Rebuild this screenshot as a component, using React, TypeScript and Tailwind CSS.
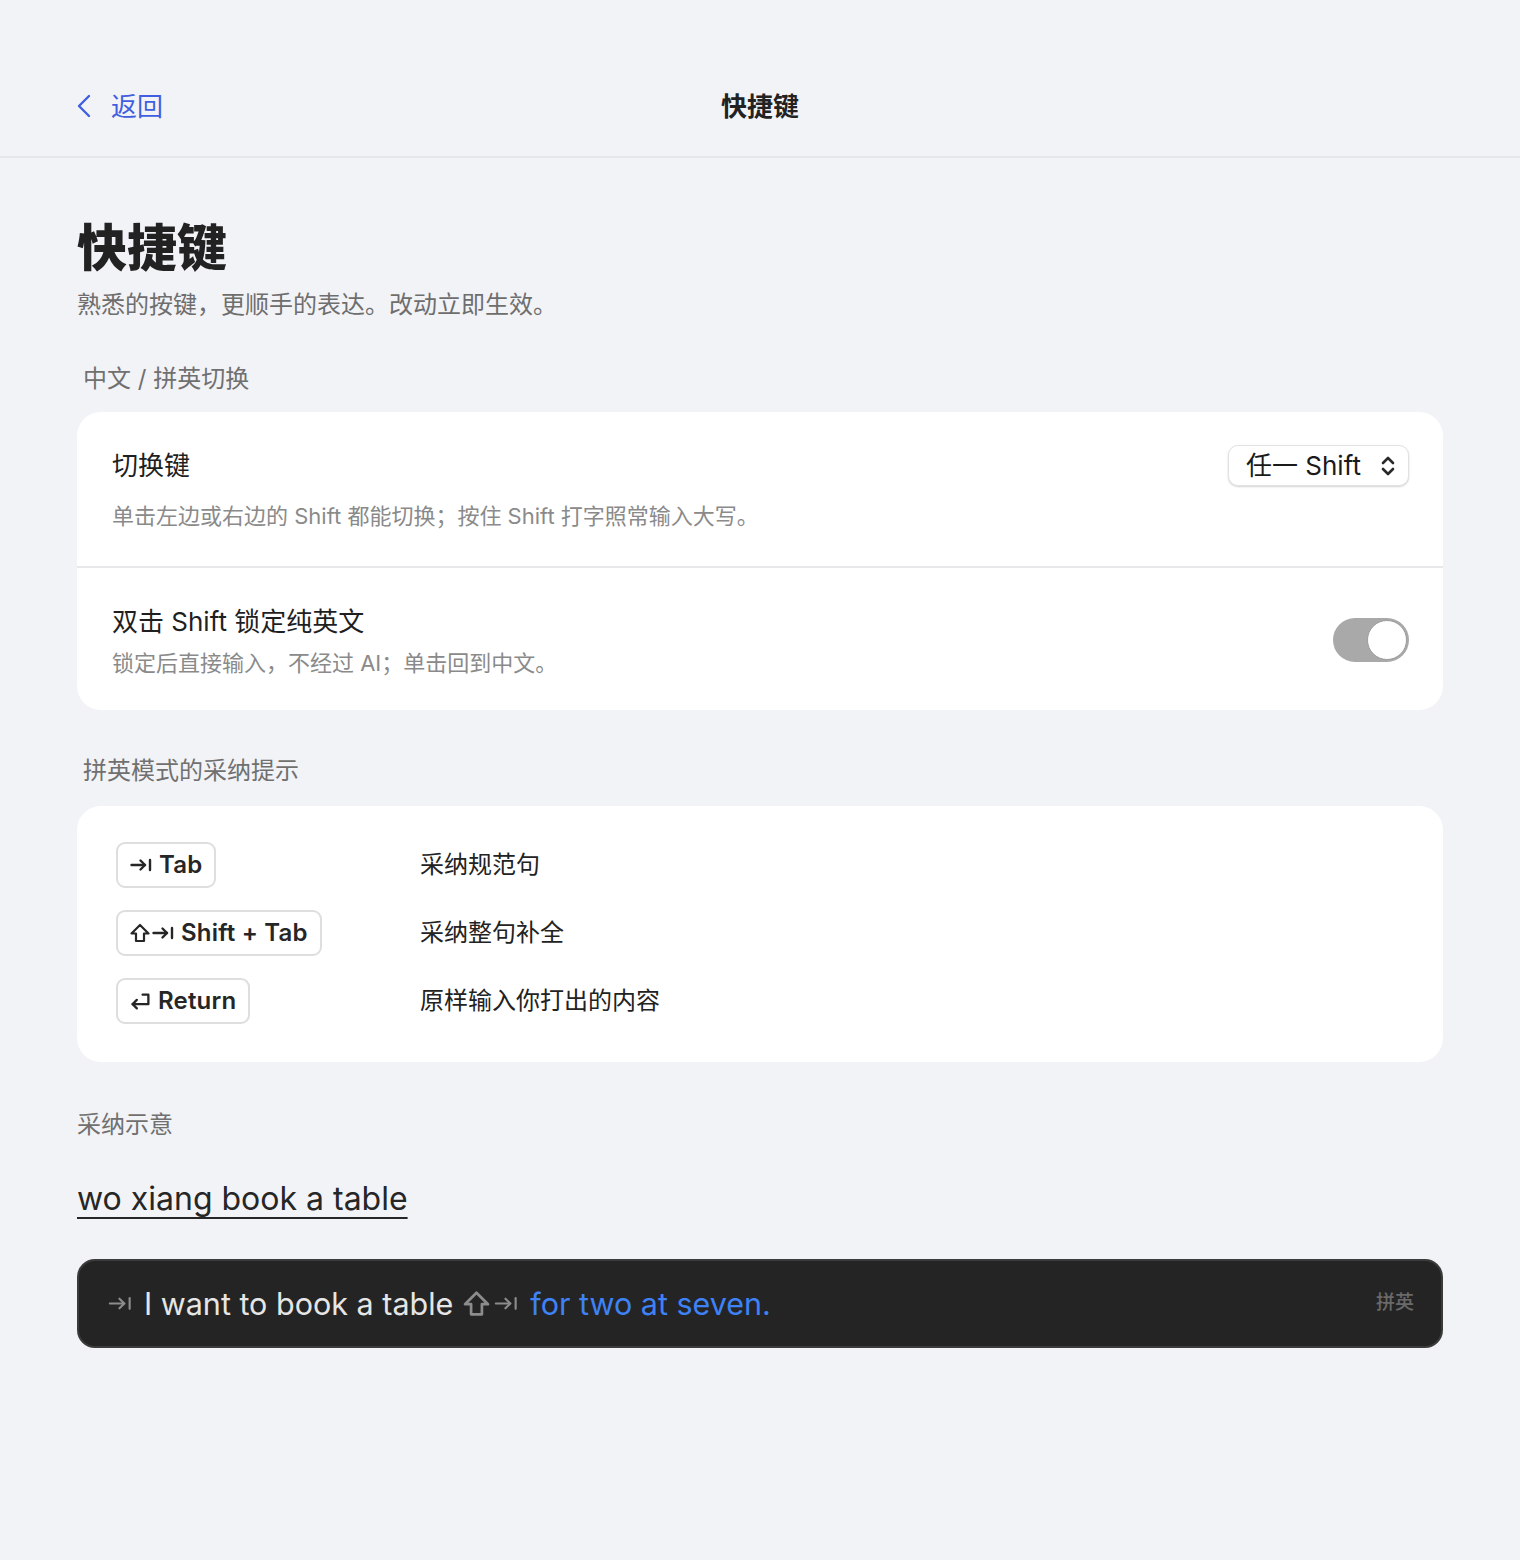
import React from "react";

const font = { fontFamily: '"Inter", "Noto Sans CJK SC", sans-serif' };

function TabIcon({ className = "", sw = 2 }: { className?: string; sw?: number }) {
  return (
    <svg viewBox="0 0 22 14" className={className} fill="none" stroke="currentColor" strokeWidth={sw} strokeLinecap="round" strokeLinejoin="round">
      <path d="M1.5 7 H15" />
      <path d="M10.5 2.5 L15 7 L10.5 11.5" />
      <path d="M20 2 V12" />
    </svg>
  );
}

function ShiftIcon({ className = "", sw = 2 }: { className?: string; sw?: number }) {
  return (
    <svg viewBox="0 0 20 20" className={className} fill="none" stroke="currentColor" strokeWidth={sw} strokeLinejoin="round">
      <path d="M10 2 L18.5 10.5 H14 V18 H6 V10.5 H1.5 Z" />
    </svg>
  );
}

function ReturnIcon({ className = "" }: { className?: string }) {
  return (
    <svg viewBox="0 0 20 18" className={className} fill="none" stroke="currentColor" strokeWidth="2.2" strokeLinecap="round" strokeLinejoin="round">
      <path d="M12 2.5 H17.5 V11.5 H2.5" />
      <path d="M6.5 7.5 L2.5 11.5 L6.5 15.5" />
    </svg>
  );
}

function Keycap({ children }: { children: React.ReactNode }) {
  return (
    <div className="inline-flex h-[46px] items-center gap-[7px] rounded-[9px] border-2 border-[#dedede] bg-white pl-[12px] pr-[12px] text-[24px] font-semibold tracking-[0.2px] text-[#262626]">
      {children}
    </div>
  );
}

export default function App() {
  return (
    <div className="min-h-[1560px] w-full bg-[#f2f3f7]" style={font}>
      {/* Header */}
      <div className="border-b-2 border-[#e6e7eb] pt-[56px]">
        <div className="grid h-[100px] grid-cols-3 items-center px-[77px]">
          <div className="flex items-center gap-[20px] text-[#3f5fe0]">
            <svg viewBox="0 0 14 24" className="h-[24px] w-[14px]" fill="none" stroke="currentColor" strokeWidth="2.4" strokeLinecap="round" strokeLinejoin="round">
              <path d="M12 2 L2 12 L12 22" />
            </svg>
            <span className="text-[26px]">返回</span>
          </div>
          <div className="text-center text-[26px] font-semibold text-[#222]">快捷键</div>
          <div />
        </div>
      </div>

      <div className="px-[77px]">
        {/* Title */}
        <h1 className="mt-[60px] text-[50px] font-black leading-[60px] text-[#222]">快捷键</h1>
        <p className="mt-[12px] text-[24px] leading-[30px] text-[#6e6e6e]">熟悉的按键，更顺手的表达。改动立即生效。</p>

        {/* Section 1 */}
        <div className="mt-[44px] px-[6px] text-[24px] leading-[30px] text-[#707070]">中文 / 拼英切换</div>
        <div className="mt-[18px] overflow-hidden rounded-[24px] bg-white">
          <div className="flex items-start justify-between pb-[35px] pl-[35px] pr-[34px] pt-[36px]">
            <div>
              <div className="text-[26px] leading-[36px] text-[#1f1f1f]">切换键</div>
              <div className="mt-[17px] text-[22px] leading-[30px] text-[#8a8a8a]">单击左边或右边的 Shift 都能切换；按住 Shift 打字照常输入大写。</div>
            </div>
            <div className="mt-[-3px] flex h-[41px] w-[181px] items-center justify-between rounded-[10px] border border-[#e2e2e2] bg-white pl-[17px] pr-[12px] shadow-[0_1px_2px_rgba(0,0,0,0.18)]">
              <span className="text-[26px] text-[#1a1a1a]">任一 Shift</span>
              <svg viewBox="0 0 16 26" className="h-[26px] w-[16px]" fill="none" stroke="#2a2a2a" strokeWidth="2.6" strokeLinecap="round" strokeLinejoin="round">
                <path d="M3 10 L8 5 L13 10" />
                <path d="M3 16 L8 21 L13 16" />
              </svg>
            </div>
          </div>
          <div className="h-[2px] bg-[#e8e8ea]" />
          <div className="flex items-center justify-between pb-[32px] pl-[35px] pr-[34px] pt-[36px]">
            <div>
              <div className="text-[26px] leading-[36px] text-[#1f1f1f]">双击 Shift 锁定纯英文</div>
              <div className="mt-[8px] text-[22px] leading-[30px] text-[#8a8a8a]">锁定后直接输入，不经过 AI；单击回到中文。</div>
            </div>
            <div className="mt-[-3px] flex h-[44px] w-[76px] items-center justify-end rounded-full bg-[#a9a9a9] p-[2px]">
              <div className="h-[40px] w-[40px] rounded-full border border-[#9c9c9c] bg-white" />
            </div>
          </div>
        </div>

        {/* Section 2 */}
        <div className="mt-[46px] px-[6px] text-[24px] leading-[30px] text-[#707070]">拼英模式的采纳提示</div>
        <div className="mt-[20px] flex flex-col gap-[22px] rounded-[24px] bg-white pb-[38px] pl-[39px] pr-[34px] pt-[36px]">
          <div className="flex items-center">
            <div className="w-[304px]">
              <Keycap>
                <TabIcon className="h-[14px] w-[22px]" sw={2.4} />
                <span>Tab</span>
              </Keycap>
            </div>
            <div className="text-[24px] text-[#222]">采纳规范句</div>
          </div>
          <div className="flex items-center">
            <div className="w-[304px]">
              <Keycap>
                <span className="flex items-center gap-[2px]">
                  <ShiftIcon className="h-[20px] w-[20px]" sw={2.2} />
                  <TabIcon className="h-[14px] w-[22px]" sw={2.4} />
                </span>
                <span>Shift + Tab</span>
              </Keycap>
            </div>
            <div className="text-[24px] text-[#222]">采纳整句补全</div>
          </div>
          <div className="flex items-center">
            <div className="w-[304px]">
              <Keycap>
                <ReturnIcon className="h-[19px] w-[21px]" />
                <span>Return</span>
              </Keycap>
            </div>
            <div className="text-[24px] text-[#222]">原样输入你打出的内容</div>
          </div>
        </div>

        {/* Demo */}
        <div className="mt-[48px] text-[24px] leading-[30px] text-[#707070]">采纳示意</div>
        <div className="mt-[39px] text-[32px] leading-[40px] text-[#262626] underline decoration-[2px] underline-offset-[7px]">wo xiang book a table</div>
        <div className="mt-[40px] flex h-[89px] items-center justify-between rounded-[18px] border-2 border-[#3b3b3b] bg-[#242424] pl-[27px] pr-[27px]">
          <div className="flex items-center text-[30.5px]">
            <TabIcon className="mr-[10px] h-[15px] w-[28px] text-[#8c8c8c]" />
            <span className="text-[#e6e6e6]">I want to book a table</span>
            <span className="ml-[10px] mr-[10px] flex items-center gap-[2px] text-[#8c8c8c]">
              <ShiftIcon className="h-[27px] w-[27px]" />
              <TabIcon className="h-[15px] w-[28px]" />
            </span>
            <span className="text-[#3e82f5]">for two at seven.</span>
          </div>
          <span className="text-[19px] font-medium text-[#6a6a6a]">拼英</span>
        </div>
      </div>
    </div>
  );
}
